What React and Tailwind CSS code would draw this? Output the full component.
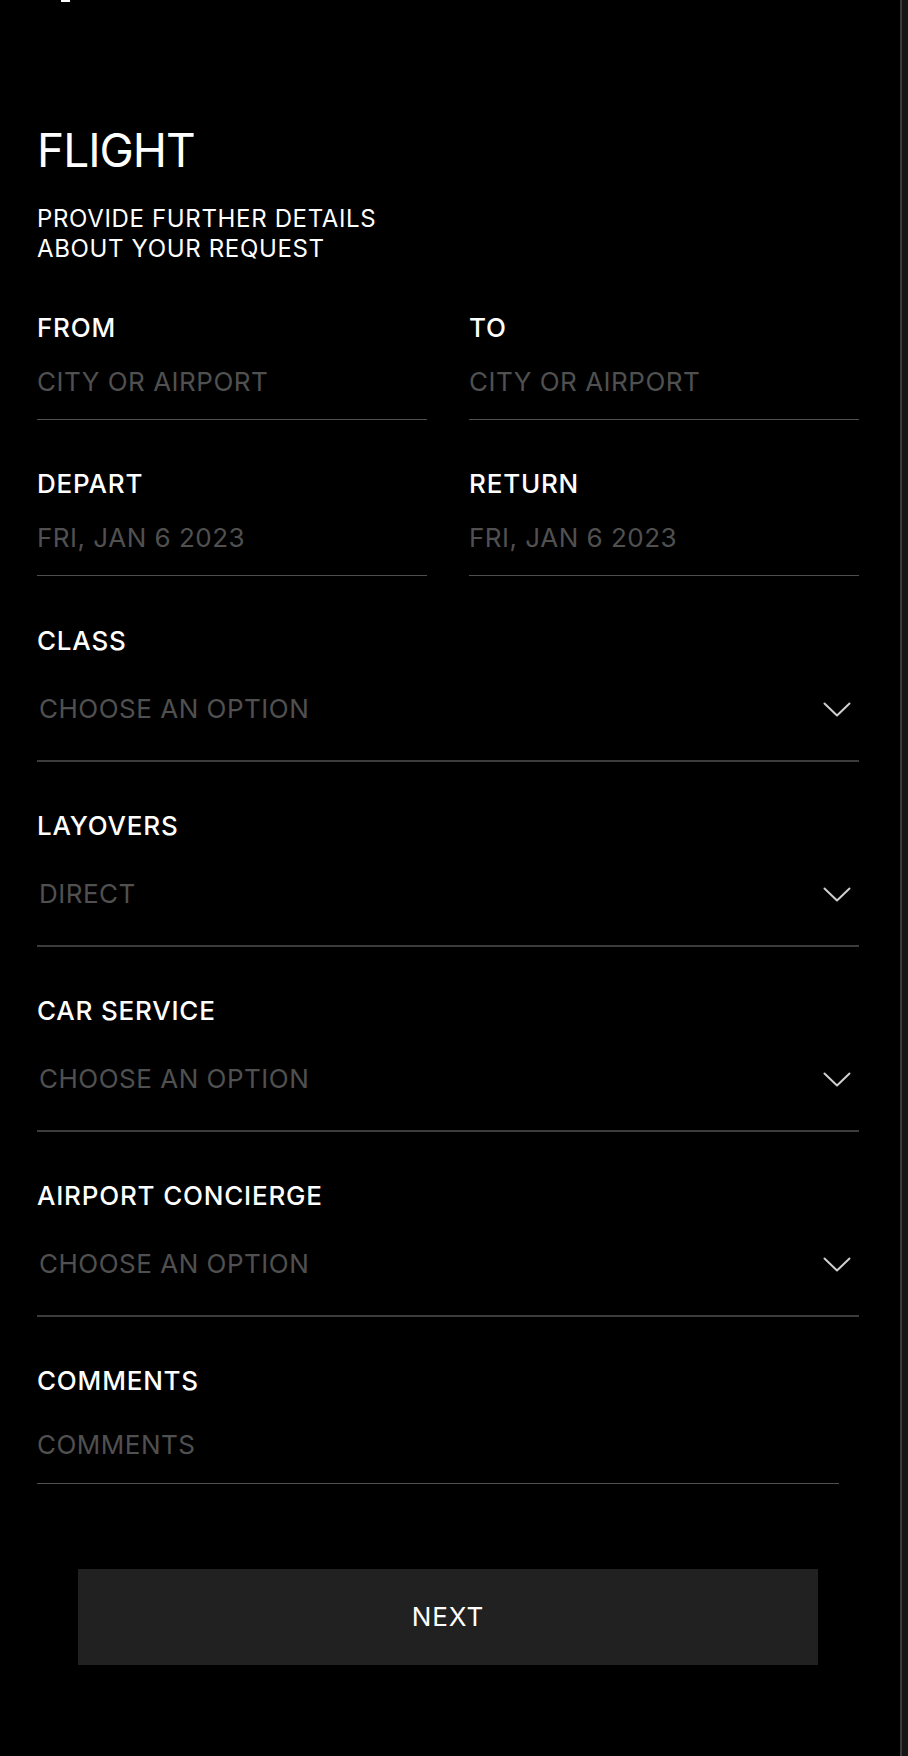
import { useState } from "react";

const Chevron = () => (
    <svg
        width="28"
        height="15"
        viewBox="0 0 28 15"
        fill="none"
        stroke="#cfcfcf"
        strokeWidth="2"
        strokeLinecap="round"
        strokeLinejoin="round"
    >
        <path d="M1.5 1.5 L14 13.5 L26.5 1.5" />
    </svg>
);

const TextField = ({ label, placeholder }) => (
    <div className="flex flex-col">
        <span className="text-[26px] leading-[30px] font-medium tracking-[0.8px] text-white">
            {label}
        </span>
        <div className="mt-[24px] pb-[22px] border-b border-[#4f4f4f]">
            <input
                type="text"
                placeholder={placeholder}
                className="w-full bg-transparent outline-none text-[26px] leading-[30px] h-[30px] tracking-[0.5px] text-white placeholder:text-[#505050]"
            />
        </div>
    </div>
);

const SelectField = ({ label, value }) => (
    <div className="flex flex-col">
        <span className="text-[26px] leading-[30px] font-medium tracking-[0.8px] text-white">
            {label}
        </span>
        <button
            type="button"
            className="mt-[38px] pb-[36px] pl-[2px] pr-[8px] flex items-center justify-between border-b-2 border-[#3c3c3c] text-left"
        >
            <span className="text-[26px] leading-[30px] tracking-[0.5px] text-[#505050]">
                {value}
            </span>
            <Chevron />
        </button>
    </div>
);

const App = () => {
    const [comment, setComment] = useState("");

    return (
        <div
            className="flex w-full h-[1756px] bg-black overflow-hidden"
            style={{ fontFamily: "Inter, 'Noto Sans', sans-serif" }}
        >
            <main className="flex-1 flex flex-col pl-[37px] pr-[41px]">
                <div className="flex pl-[24px]">
                    <div className="h-[2px] w-[9px] bg-white" />
                </div>

                <h1 className="mt-[120px] text-[46px] leading-[56px] font-normal tracking-[-1px] text-white">
                    FLIGHT
                </h1>
                <p className="mt-[26px] text-[24px] leading-[30px] tracking-[0.65px] text-white">
                    PROVIDE FURTHER DETAILS
                    <br />
                    ABOUT YOUR REQUEST
                </p>

                <div className="mt-[49px] grid grid-cols-2 gap-x-[42px] gap-y-[49px]">
                    <TextField label="FROM" placeholder="CITY OR AIRPORT" />
                    <TextField label="TO" placeholder="CITY OR AIRPORT" />
                    <TextField label="DEPART" placeholder="FRI, JAN 6 2023" />
                    <TextField label="RETURN" placeholder="FRI, JAN 6 2023" />
                </div>

                <div className="mt-[50px] flex flex-col gap-[49px]">
                    <SelectField label="CLASS" value="CHOOSE AN OPTION" />
                    <SelectField label="LAYOVERS" value="DIRECT" />
                    <SelectField label="CAR SERVICE" value="CHOOSE AN OPTION" />
                    <SelectField
                        label="AIRPORT CONCIERGE"
                        value="CHOOSE AN OPTION"
                    />
                </div>

                <div className="mt-[49px] flex flex-col w-[802px]">
                    <span className="text-[26px] leading-[30px] font-medium tracking-[0.8px] text-white">
                        COMMENTS
                    </span>
                    <div className="mt-[34px] pb-[23px] border-b border-[#4f4f4f]">
                        <input
                            type="text"
                            value={comment}
                            onChange={(e) => setComment(e.target.value)}
                            placeholder="COMMENTS"
                            className="w-full bg-transparent outline-none text-[26px] leading-[30px] h-[30px] tracking-[0.5px] text-white placeholder:text-[#505050]"
                        />
                    </div>
                </div>

                <div className="mt-[85px] flex justify-center">
                    <button
                        type="button"
                        className="w-[740px] h-[96px] bg-[#212121] text-white text-[26px] leading-[30px] tracking-[1px]"
                    >
                        NEXT
                    </button>
                </div>
            </main>
            <div className="w-[8px] shrink-0 border-l-2 border-[#3a3a3a] bg-[#161616]" />
        </div>
    );
};

export default App;
